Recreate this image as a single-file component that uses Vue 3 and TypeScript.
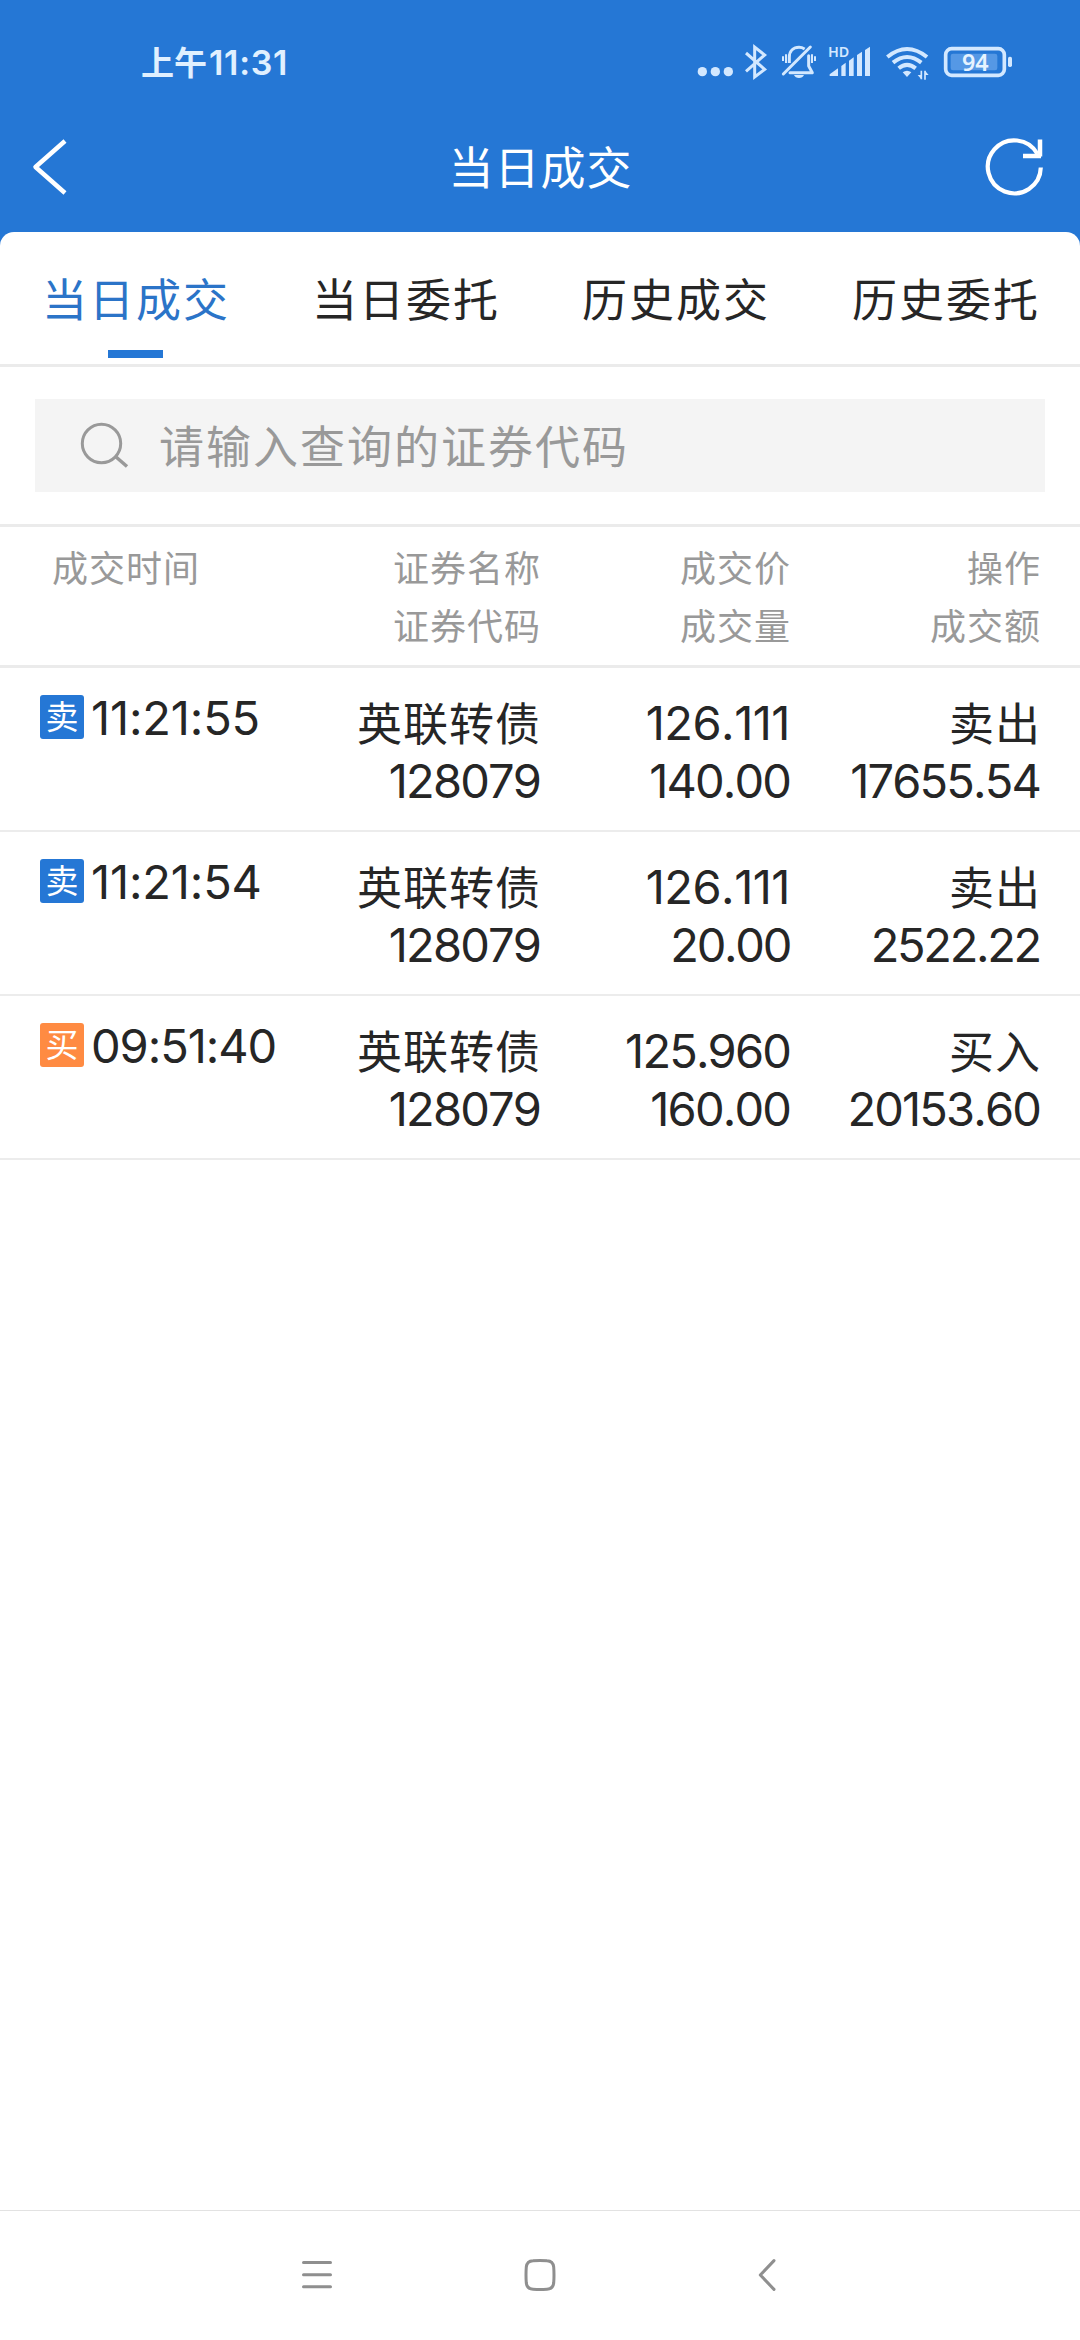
<script setup lang="ts">
import { ref } from 'vue'

interface Trade {
  side: 'sell' | 'buy'
  time: string
  name: string
  code: string
  price: string
  volume: string
  amount: string
}

const tabs: string[] = ['当日成交', '当日委托', '历史成交', '历史委托']
const active = ref(0)
const keyword = ref('')

const trades: Trade[] = [
  { side: 'sell', time: '11:21:55', name: '英联转债', code: '128079', price: '126.111', volume: '140.00', amount: '17655.54' },
  { side: 'sell', time: '11:21:54', name: '英联转债', code: '128079', price: '126.111', volume: '20.00', amount: '2522.22' },
  { side: 'buy', time: '09:51:40', name: '英联转债', code: '128079', price: '125.960', volume: '160.00', amount: '20153.60' },
]

const badge = { sell: '卖', buy: '买' }
const action = { sell: '卖出', buy: '买入' }

function tracking(value: string, base = -2.3) {
  const ones = value.split('1').length - 1
  return { letterSpacing: `${(base + ones * 0.45).toFixed(2)}px` }
}
</script>

<template>
  <div class="screen">
    <header class="top">
      <div class="status">
        <div class="clock"><span>上午</span><span class="clock-num">11:31</span></div>
        <svg class="status-icons" viewBox="0 0 1080 210" width="360" height="70" fill="none" stroke="#d3e8ff">
          <g fill="#d3e8ff" stroke="none">
            <circle cx="67" cy="125" r="14" />
            <circle cx="106" cy="125" r="14" />
            <circle cx="145" cy="125" r="14" />
          </g>
          <path d="M198 69 L254 118 L224 141 V51 L254 75 L198 124" stroke-width="9" />
          <g stroke-width="9">
            <path d="M310 132 L391 51" stroke-linecap="round" />
            <path d="M328 99 V82 C328 62 341 52 357 52 C364 52 369 54 374 57" />
            <path d="M386 77 V108 L397 128 H330" stroke-linejoin="round" stroke-linecap="round" />
            <path d="M309 79 V93 M318 73 V99 M396 73 V99 M405 79 V93" stroke-width="6" />
          </g>
          <path d="M342 135 H372 Q368 144 357 144 Q346 144 342 135Z" fill="#d3e8ff" stroke="none" />
          <text x="444" y="81" class="hd" fill="#d3e8ff" stroke="none">HD</text>
          <g fill="#d3e8ff" stroke="none">
            <path d="M449 138 V133 L474 115 V138Z" />
            <path d="M484 138 V108 L497 98 V138Z" />
            <path d="M507 138 V92 L521 82 V138Z" />
            <path d="M531 138 V75 L546 65 V138Z" />
            <path d="M555 138 V60 L570 50 V138Z" />
          </g>
          <g stroke-width="12">
            <path d="M622 81 Q681 33 741 81" />
            <path d="M639 98 Q681 64 724 98" />
            <path d="M656 115 Q681 94 707 115" />
          </g>
          <path d="M668 127 Q681 117 694 127 L681 141Z" fill="#d3e8ff" stroke="none" />
          <path d="M724 122 V148 M735 149 V122" stroke-width="5" />
          <path d="M713 135 L724 148 V135Z M746 135 L735 122 V135Z" fill="#d3e8ff" stroke="none" />
          <rect x="797" y="56" width="176" height="80" rx="18" stroke-width="11" />
          <rect x="812" y="71" width="140" height="50" rx="7" fill="#5598e5" stroke="none" />
          <rect x="984" y="80" width="12" height="31" rx="5" fill="#d3e8ff" stroke="none" />
          <text x="886" y="122" class="battery" text-anchor="middle" fill="#e6f3ff" stroke="none">94</text>
        </svg>
      </div>
      <div class="title-bar">
        <svg width="36" height="58" viewBox="0 0 36 58" fill="none" stroke="#fff" stroke-width="4.5">
          <path d="M33 3 L3.500 29 L33 55" stroke-linejoin="round" />
        </svg>
        <h1>当日成交</h1>
        <svg width="60" height="60" viewBox="0 0 60 60" fill="none" stroke="#fff" stroke-width="4.2">
          <path d="M55.800 30.500 A26.500 26.500 0 1 1 52.500 17" />
          <path d="M55 2.500 V19.500 M56 19 H38" stroke-width="4.500" />
        </svg>
      </div>
    </header>

    <main class="panel">
      <nav class="tabs">
        <button v-for="(tab, i) in tabs" :key="tab" class="tab" :class="{ on: i === active }" @click="active = i">
          <span>{{ tab }}</span>
          <i class="bar" />
        </button>
      </nav>

      <section class="search-wrap">
        <label class="search">
          <svg width="50" height="50" viewBox="0 0 50 50" fill="none" stroke="#999" stroke-width="3">
            <circle cx="21.500" cy="22.500" r="19.200" />
            <path d="M35.500 35.500 L47 45.500" stroke-width="3.500" />
          </svg>
          <input v-model="keyword" placeholder="请输入查询的证券代码" />
        </label>
      </section>

      <section class="head grid">
        <div class="first">成交时间</div>
        <div>证券名称<br />证券代码</div>
        <div>成交价<br />成交量</div>
        <div>操作<br />成交额</div>
      </section>

      <section v-for="t in trades" :key="t.time" class="row grid">
        <div class="when">
          <span class="badge" :class="t.side">{{ badge[t.side] }}</span>
          <span class="num" :style="tracking(t.time, -1.5)">{{ t.time }}</span>
        </div>
        <div>
          <p class="han">{{ t.name }}</p>
          <p class="num" :style="tracking(t.code)">{{ t.code }}</p>
        </div>
        <div>
          <p class="num" :style="tracking(t.price)">{{ t.price }}</p>
          <p class="num" :style="tracking(t.volume)">{{ t.volume }}</p>
        </div>
        <div>
          <p class="han">{{ action[t.side] }}</p>
          <p class="num" :style="tracking(t.amount)">{{ t.amount }}</p>
        </div>
      </section>
    </main>

    <footer class="system-nav">
      <svg width="32" height="32" viewBox="0 0 32 32" stroke="#8f8f8f" stroke-width="3" stroke-linecap="round">
        <path d="M2.500 3.500 H29.500 M2.500 15.700 H29.500 M2.500 27.700 H29.500" />
      </svg>
      <svg width="32" height="32" viewBox="0 0 32 32" fill="none" stroke="#8f8f8f" stroke-width="3">
        <path d="M9 1.800 Q16 1.200 23 1.800 Q29 2.100 29.700 8 Q30.300 16 29.700 24 Q29 29.900 23 30.300 Q16 30.800 9 30.300 Q3 29.900 2.300 24 Q1.700 16 2.300 8 Q3 2.100 9 1.800Z" />
      </svg>
      <svg width="32" height="32" viewBox="0 0 32 32" fill="none" stroke="#8f8f8f" stroke-width="3" stroke-linecap="round">
        <path d="M27 1.600 L13.300 16 L27 30.400" stroke-linejoin="round" />
      </svg>
    </footer>
  </div>
</template>

<style>
body {
  margin: 0;
  background: #fff;
}
</style>

<style scoped>
.screen {
  width: 1080px;
  height: 2340px;
  display: flex;
  flex-direction: column;
  background: #2577d5;
  color: #262626;
  font-family: 'Noto Sans CJK SC', sans-serif;
  overflow: hidden;
}
.top {
  height: 232px;
  flex: none;
}
.status {
  height: 100px;
  padding: 30px 40px 0 141px;
  box-sizing: border-box;
  display: flex;
  justify-content: space-between;
}
.clock {
  display: flex;
  align-items: baseline;
  height: 70px;
  line-height: 62px;
  font-size: 33px;
  font-weight: 700;
  color: #e0f0ff;
}
.clock-num {
  font-family: Inter, sans-serif;
  font-size: 34px;
  font-weight: 600;
  font-kerning: none;
  letter-spacing: 0.7px;
  margin-left: 2px;
}
.status-icons {
  display: block;
}
.hd {
  font: 600 43px 'Noto Sans', sans-serif;
}
.battery {
  font: 600 70px 'Noto Sans', sans-serif;
}
.title-bar {
  height: 132px;
  padding: 0 35px 0 32px;
  display: flex;
  justify-content: space-between;
  align-items: center;
  box-sizing: border-box;
}
.title-bar svg {
  margin-top: 2px;
}
h1 {
  margin: 0;
  flex: 1;
  text-align: center;
  font-size: 45px;
  line-height: 66px;
  font-weight: 400;
  letter-spacing: 1px;
  color: #fff;
  padding: 0 0 1px 28px;
}
.panel {
  flex: 1;
  background: #fff;
  border-radius: 14px 14px 0 0;
}
.tabs {
  display: flex;
  height: 132px;
  border-bottom: 3px solid #ebebeb;
}
.tab {
  flex: 1;
  padding: 0;
  border: 0;
  background: none;
  font: 400 45px/66px 'Noto Sans CJK SC', sans-serif;
  letter-spacing: 2px;
  color: #262626;
  display: flex;
  flex-direction: column;
  align-items: center;
  justify-content: flex-end;
}
.tab span {
  padding-left: 2px;
}
.bar {
  width: 55px;
  height: 8px;
  margin: 19px 0 6px;
}
.tab.on {
  color: #2b74c8;
}
.tab.on .bar {
  background: #2577d5;
}
.search-wrap {
  padding: 32px 35px;
  border-bottom: 3px solid #ebebeb;
}
.search {
  display: flex;
  align-items: center;
  height: 93px;
  padding-left: 45px;
  background: #f4f4f4;
}
.search svg {
  flex: none;
}
input {
  flex: 1;
  border: 0;
  outline: 0;
  padding: 0;
  margin: 0 0 2px 29px;
  height: 70px;
  background: none;
  font: 400 45px/66px 'Noto Sans CJK SC', sans-serif;
  letter-spacing: 2px;
}
input::placeholder {
  color: #999;
  opacity: 1;
}
.grid {
  display: grid;
  grid-template-columns: 290px 250px 250px 250px;
  padding-right: 40px;
  box-sizing: border-box;
  text-align: right;
}
.head {
  height: 141px;
  padding: 10px 39px 0 1px;
  border-bottom: 3px solid #ebebeb;
  font-size: 36px;
  line-height: 58px;
  letter-spacing: 1px;
  color: #999;
}
.head .first {
  text-align: left;
  padding-left: 51px;
}
.row {
  height: 164px;
  padding-top: 26px;
  border-bottom: 2px solid #ececec;
}
p {
  margin: 0;
  height: 58px;
  line-height: 58px;
  white-space: nowrap;
}
.han {
  font-size: 45px;
  line-height: 56px;
  letter-spacing: 1px;
  margin-right: -1px;
}
.num {
  font-family: Inter, sans-serif;
  font-size: 47px;
  font-kerning: none;
}
.when {
  display: flex;
  align-items: flex-start;
  padding-left: 40px;
}
.badge {
  flex: none;
  width: 44px;
  height: 44px;
  margin: 1px 7px 0 0;
  border-radius: 3px;
  font-size: 33px;
  line-height: 41px;
  text-align: center;
  color: #fff;
}
.badge.sell {
  background: #2577d5;
}
.badge.buy {
  background: #ff8b42;
}
.when .num {
  line-height: 48px;
}
.system-nav {
  flex: none;
  height: 130px;
  padding: 48px 301px 0;
  box-sizing: border-box;
  border-top: 1px solid #e2e2e2;
  background: #fff;
  display: flex;
  align-items: flex-start;
  justify-content: space-between;
}
</style>
